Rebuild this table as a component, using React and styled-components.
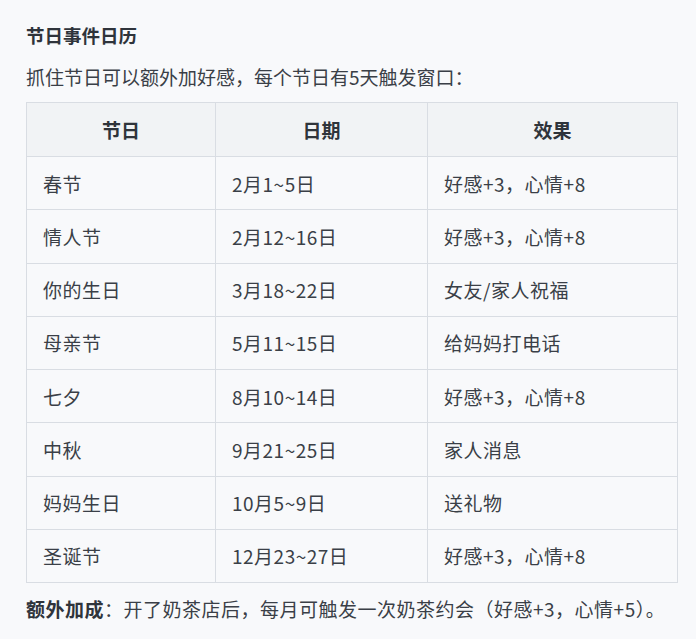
import React from 'react';
import styled, { createGlobalStyle } from 'styled-components';

const GlobalStyle = createGlobalStyle`
    body {
        margin: 0;
        background: #f8f9fb;
        font-family: "Noto Sans CJK SC", "Noto Sans", sans-serif;
        color: #3a3f47;
    }
`

const Page = styled.div`
    padding: 22px 19px 0 26px;
`

const Title = styled.h3`
    margin: 0;
    font-size: 18.5px;
    font-weight: 700;
    line-height: 26px;
    color: #2f343b;
`

const Intro = styled.p`
    margin: 16px 0 0;
    font-size: 19px;
    line-height: 26px;
`

const Table = styled.table`
    margin-top: 12px;
    width: 651px;
    table-layout: fixed;
    border-collapse: collapse;
    font-size: 19px;
`

const HeadCell = styled.th`
    box-sizing: border-box;
    background: #f1f3f5;
    border: 1px solid #d9dde3;
    height: 54px;
    padding: 0 16px;
    font-weight: 700;
    color: #2f343b;
    text-align: center;
    width: ${p => p.$w}px;
`

const Cell = styled.td`
    box-sizing: border-box;
    border: 1px solid #d9dde3;
    height: 53.25px;
    padding: 0 16px;
    letter-spacing: 0.5px;
`

const Footer = styled.p`
    margin: 13px 0 0;
    font-size: 19px;
    line-height: 26px;
    letter-spacing: 0.5px;

    b {
        font-weight: 700;
        color: #2f343b;
    }
`

const rows = [
    ['春节', '2月1~5日', '好感+3，心情+8'],
    ['情人节', '2月12~16日', '好感+3，心情+8'],
    ['你的生日', '3月18~22日', '女友/家人祝福'],
    ['母亲节', '5月11~15日', '给妈妈打电话'],
    ['七夕', '8月10~14日', '好感+3，心情+8'],
    ['中秋', '9月21~25日', '家人消息'],
    ['妈妈生日', '10月5~9日', '送礼物'],
    ['圣诞节', '12月23~27日', '好感+3，心情+8'],
];

export default function App() {
    return (
        <Page>
            <GlobalStyle />
            <Title>节日事件日历</Title>
            <Intro>抓住节日可以额外加好感，每个节日有5天触发窗口：</Intro>
            <Table>
                <thead>
                    <tr>
                        <HeadCell $w={189}>节日</HeadCell>
                        <HeadCell $w={212}>日期</HeadCell>
                        <HeadCell $w={250}>效果</HeadCell>
                    </tr>
                </thead>
                <tbody>
                    {rows.map(r => (
                        <tr key={r[0]}>
                            {r.map(c => <Cell key={c}>{c}</Cell>)}
                        </tr>
                    ))}
                </tbody>
            </Table>
            <Footer><b>额外加成</b>：开了奶茶店后，每月可触发一次奶茶约会（好感+3，心情+5）。</Footer>
        </Page>
    );
}
